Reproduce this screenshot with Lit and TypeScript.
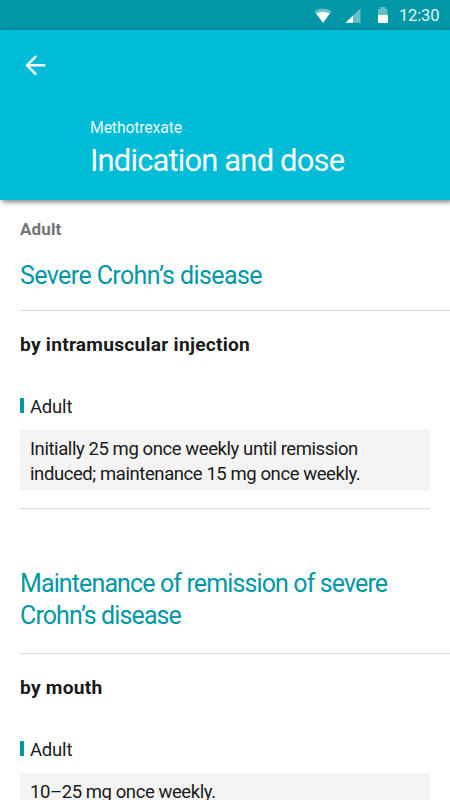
import { LitElement, html, css, svg } from "lit";
import { customElement, property } from "lit/decorators.js";
import { classMap } from "lit/directives/class-map.js";

interface Dose {
  indication: string;
  route: string;
  group: string;
  text: string;
}

const DOSES: Dose[] = [
  {
    indication: "Severe Crohn’s disease",
    route: "by intramuscular injection",
    group: "Adult",
    text: "Initially 25 mg once weekly until remission induced; maintenance 15 mg once weekly.",
  },
  {
    indication: "Maintenance of remission of severe Crohn’s disease",
    route: "by mouth",
    group: "Adult",
    text: "10–25 mg once weekly.",
  },
];

@customElement("status-bar")
export class StatusBar extends LitElement {
  static styles = css`
    :host {
      display: flex;
      align-items: center;
      height: 30px;
      background: #0097a7;
      color: #e4f4f6;
      padding-right: 11px;
      justify-content: flex-end;
      box-sizing: border-box;
    }
    .icons {
      display: block;
      flex: none;
    }
    .time {
      width: 40px;
      margin-left: 10px;
      font-size: 16.5px;
      line-height: 30px;
      padding-top: 2px;
      letter-spacing: -0.15px;
      white-space: nowrap;
    }
  `;

  render() {
    return html`
      <svg class="icons" width="76" height="30" viewBox="313 0 76 30" fill="#fff">
        ${svg`
          <path opacity=".4" d="M314.300 11.200Q323 5.600 331.700 11.200L323 23Z"/>
          <path d="M316.200 13.600Q323 9.800 329.800 13.600L323 22.800Z"/>
          <path opacity=".4" d="M360.500 8.300V22.800H345.700Z"/>
          <path d="M353 15.600V22.800H345.700Z"/>
          <path opacity=".4" d="M378 9H380V7H385.500V9H387.500V15H378Z"/>
          <path d="M378 15H388V21.800Q388 23 386.800 23H379.200Q378 23 378 21.800Z"/>
        `}
      </svg>
      <span class="time">12:30</span>
    `;
  }
}

@customElement("top-bar")
export class TopBar extends LitElement {
  static styles = css`
    :host {
      display: block;
      height: 170px;
      box-sizing: border-box;
      padding-top: 23px;
      background: #00bcd7;
      color: #fff;
      box-shadow: 2px 2px 5px rgba(0, 0, 0, 0.5);
      position: relative;
    }
    .back {
      display: block;
      margin-left: 23px;
    }
    .drug {
      margin: 38.5px 0 0 90px;
      font-size: 15.8px;
      line-height: 24px;
      letter-spacing: -0.15px;
      color: #e6f8fb;
    }
    .title {
      margin: 2.5px 0 0 90px;
      font-size: 31px;
      line-height: 38px;
      font-weight: 400;
      letter-spacing: -0.86px;
    }
  `;

  render() {
    return html`
      <svg class="back" width="26" height="24" viewBox="23 53 26 24"
        fill="none" stroke="#fff" stroke-width="2.4">
        <path d="M45.300 65.300H27M36.200 56L27 65.300L36.200 74.600" />
      </svg>
      <div class="drug">Methotrexate</div>
      <h1 class="title">Indication and dose</h1>
    `;
  }
}

@customElement("dose-section")
export class DoseSection extends LitElement {
  @property({ attribute: false }) dose!: Dose;

  static styles = css`
    :host {
      display: block;
      padding-left: 20px;
    }
    .indication {
      margin: 0;
      padding: 1px 40px 18px 0;
      border-bottom: 1px solid #dcdcdc;
      color: #0097a7;
      font-size: 25px;
      font-weight: 400;
      line-height: 32px;
      letter-spacing: -0.6px;
    }
    .indication.long {
      padding-bottom: 21px;
      letter-spacing: -0.88px;
    }
    .route {
      margin: 21px 0 0;
      font-size: 19.2px;
      line-height: 26px;
      font-weight: 700;
      letter-spacing: 0.24px;
    }
    .group {
      display: flex;
      align-items: center;
      gap: 6px;
      margin-top: 36px;
      font-size: 18.5px;
      line-height: 26px;
      letter-spacing: -0.2px;
    }
    .marker {
      width: 4px;
      height: 15px;
      margin-bottom: 3px;
      background: #0097a7;
    }
    .detail {
      margin-right: 20px;
      padding-bottom: 18px;
      border-bottom: 1px solid #dcdcdc;
    }
    .text {
      margin: 10px 0 0;
      padding: 7px 10px 3px;
      background: #f4f4f4;
      font-size: 18.5px;
      line-height: 25px;
      letter-spacing: -0.42px;
    }
  `;

  render() {
    const d = this.dose;
    return html`
      <h2 class=${classMap({ indication: true, long: d.indication.length > 32 })}>${d.indication}</h2>
      <h3 class="route">${d.route}</h3>
      <div class="group"><span class="marker"></span><span>${d.group}</span></div>
      <div class="detail"><p class="text">${d.text}</p></div>
    `;
  }
}

@customElement("app-root")
export class AppRoot extends LitElement {
  static styles = css`
    :host {
      display: block;
      height: 800px;
      overflow: hidden;
      background: #fff;
      color: #1a1a1a;
      font-family: Roboto, "Liberation Sans", sans-serif;
    }
    .patient {
      margin: 17px 0 17px 20px;
      font-size: 17px;
      line-height: 25px;
      font-weight: 700;
      letter-spacing: 0.15px;
      color: #757575;
    }
    .sections {
      display: flex;
      flex-direction: column;
      gap: 58px;
    }
  `;

  render() {
    return html`
      <status-bar></status-bar>
      <top-bar></top-bar>
      <div class="patient">Adult</div>
      <div class="sections">
        ${DOSES.map((d) => html`<dose-section .dose=${d}></dose-section>`)}
      </div>
    `;
  }
}
